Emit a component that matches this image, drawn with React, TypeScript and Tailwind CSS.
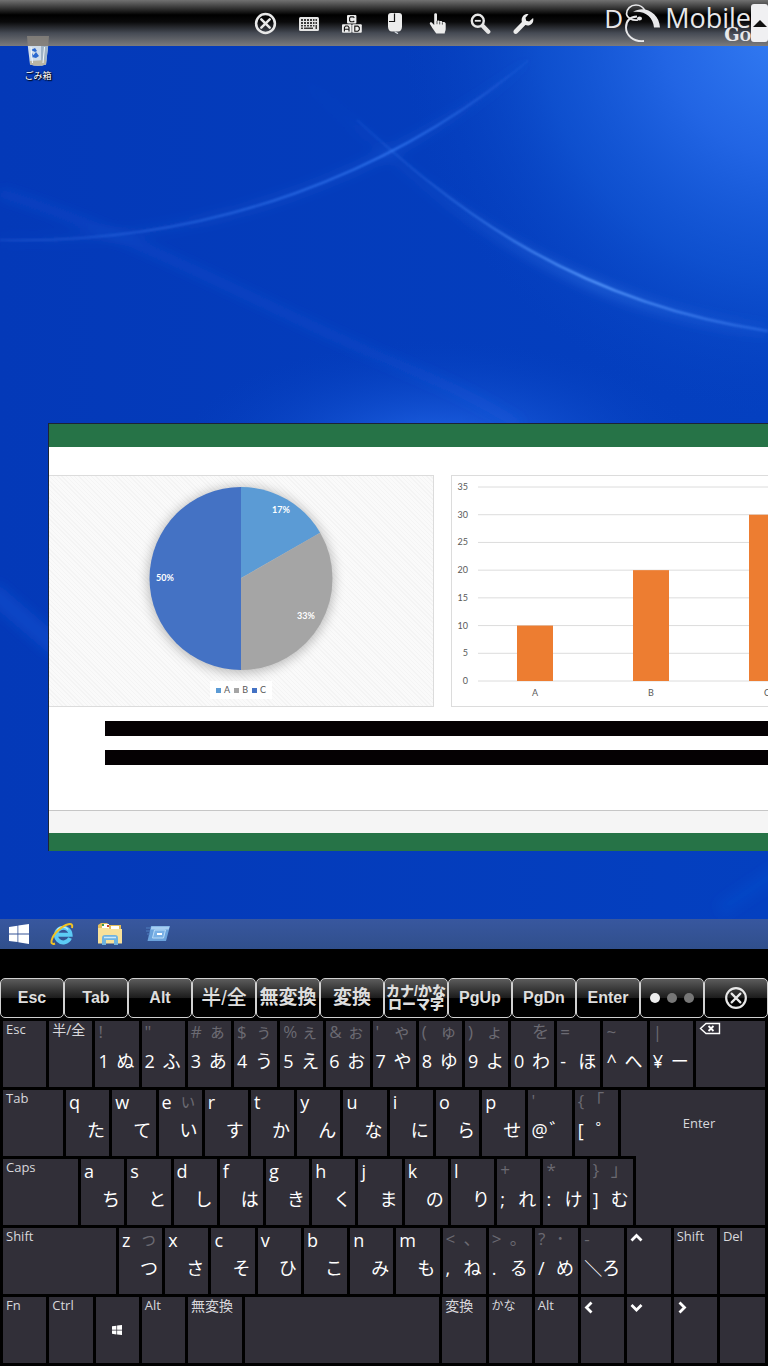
import type { ReactNode } from 'react';
import clsx from 'clsx';

const JP = "font-['Open_Sans','Noto_Sans_CJK_JP',sans-serif]";

interface KeyDef {
  w: number;
  id: string;
  // special keys carry one label, the others up to four legends
  label?: ReactNode;
  center?: boolean;
  small?: boolean;
  shift?: string;
  shiftKana?: string;
  main?: string;
  kana?: string;
}

const U = 46.2;

function special(id: string, w: number, label: ReactNode = id, extra: Partial<KeyDef> = {}): KeyDef {
  return { id, w, label, ...extra };
}

function symbol(shift: string, shiftKana: string, main: string, kana: string): KeyDef {
  return { id: main, w: U, shift, shiftKana, main, kana };
}

function letter(main: string, kana: string, shiftKana = ''): KeyDef {
  return { id: main, w: U, shift: main, shiftKana, kana };
}

function Chevron({ d }: { d: string }) {
  return (
    <svg width="13" height="13" viewBox="0 0 13 13" className="mt-1" fill="none" stroke="#fff" strokeWidth="2.8">
      <path d={d} />
    </svg>
  );
}

const BackspaceIcon = (
  <svg width="22" height="13" viewBox="0 0 22 13" className="mt-px" fill="none" stroke="#fff" strokeWidth="1.4">
    <path d="M7 1.5h13.5v10H7L1.5 6.5z" />
    <path d="M9.5 4l5 5M14.5 4l-5 5" strokeWidth="1.8" />
  </svg>
);

const WinKeyIcon = (
  <svg width="10" height="10" viewBox="0 0 10 10" className="mr-1" fill="#fff">
    <path d="M0 1.3l4.4-.6v4H0zM5.1.6L10 0v4.7H5.1zM0 5.4h4.4v4L0 8.8zM5.1 5.4H10V10l-4.9-.6z" />
  </svg>
);

const ROW_1: KeyDef[] = [
  special('Esc', U),
  special('半/全', U),
  symbol('!', '', '1', 'ぬ'),
  symbol('"', '', '2', 'ふ'),
  symbol('#', 'ぁ', '3', 'あ'),
  symbol('$', 'ぅ', '4', 'う'),
  symbol('%', 'ぇ', '5', 'え'),
  symbol('&', 'ぉ', '6', 'お'),
  symbol("'", 'ゃ', '7', 'や'),
  symbol('(', 'ゅ', '8', 'ゆ'),
  symbol(')', 'ょ', '9', 'よ'),
  symbol('', 'を', '0', 'わ'),
  symbol('=', '', '-', 'ほ'),
  symbol('~', '', '^', 'へ'),
  symbol('|', '', '¥', 'ー'),
  special('Backspace', 72, BackspaceIcon),
];

const ROW_2: KeyDef[] = [
  special('Tab', 63),
  letter('q', 'た'),
  letter('w', 'て'),
  letter('e', 'い', 'ぃ'),
  letter('r', 'す'),
  letter('t', 'か'),
  letter('y', 'ん'),
  letter('u', 'な'),
  letter('i', 'に'),
  letter('o', 'ら'),
  letter('p', 'せ'),
  symbol("'", '', '@', '゛'),
  symbol('{', '｢', '[', '゜'),
];

const ROW_3: KeyDef[] = [
  special('Caps', 78),
  letter('a', 'ち'),
  letter('s', 'と'),
  letter('d', 'し'),
  letter('f', 'は'),
  letter('g', 'き'),
  letter('h', 'く'),
  letter('j', 'ま'),
  letter('k', 'の'),
  letter('l', 'り'),
  symbol('+', '', ';', 'れ'),
  symbol('*', '', ':', 'け'),
  symbol('}', '｣', ']', 'む'),
];

const ROW_4: KeyDef[] = [
  special('Shift', 116),
  letter('z', 'つ', 'っ'),
  letter('x', 'さ'),
  letter('c', 'そ'),
  letter('v', 'ひ'),
  letter('b', 'こ'),
  letter('n', 'み'),
  letter('m', 'も'),
  symbol('<', '、', ',', 'ね'),
  symbol('>', '。', '.', 'る'),
  symbol('?', '･', '/', 'め'),
  symbol('-', '', '＼', 'ろ'),
  special('Up', U, <Chevron d="M1.5 8.5l5-5 5 5" />),
  special('Right Shift', U, 'Shift'),
  special('Del', 48),
];

const ROW_5: KeyDef[] = [
  special('Fn', U),
  special('Ctrl', U),
  special('Windows', U, WinKeyIcon, { center: true }),
  special('Alt', U),
  special('無変換', 57),
  special('Space', 197, ''),
  special('変換', U),
  special('かな', U, 'かな', { small: true }),
  special('Right Alt', U, 'Alt'),
  special('Left', U, <Chevron d="M7.5 1.5l-5 5 5 5" />),
  special('Down', U, <Chevron d="M1.5 4l5 5 5-5" />),
  special('Right', U, <Chevron d="M2.5 1.5l5 5-5 5" />),
  special('Blank', 48, ''),
];

function Key({ def, total }: { def: KeyDef; total: number }) {
  const isLetter = !def.main && def.label === undefined;
  return (
    <button
      type="button"
      aria-label={def.id}
      style={{ width: `${(def.w / total) * 100}%` }}
      className={clsx(
        'h-[69px] min-w-0 overflow-hidden whitespace-nowrap border-l-[3px] border-t-[3px] border-black bg-[#312f38] pl-[3px] text-left',
        def.center ? 'flex items-center justify-center' : 'block',
      )}
    >
      {def.label !== undefined ? (
        <span
          className={clsx(
            'block leading-[17px] text-[#d8d8dc]',
            def.center ? '' : 'h-[66px]',
            def.small ? 'text-[12px]' : /^[半無変]/.test(def.id) ? 'text-[14px]' : 'text-[13px]',
          )}
        >
          {def.label}
        </span>
      ) : (
        <span className="grid h-[66px] grid-cols-[18px_1fr] grid-rows-[24px_24px] content-start gap-y-1 text-[18px] leading-[24px] text-white">
          <span className={isLetter ? '' : 'text-[17px] leading-[22px] text-[#6b6a72]'}>{def.shift}</span>
          <span className="text-[17px] leading-[22px] text-[#6b6a72]">{def.shiftKana}</span>
          <span>{def.main}</span>
          <span>{def.kana}</span>
        </span>
      )}
    </button>
  );
}

function KeyRow({ keys, className }: { keys: KeyDef[]; className?: string }) {
  const total = keys.reduce((sum, k) => sum + k.w, 0);
  return (
    <div className={clsx('flex', className)}>
      {keys.map((k) => (
        <Key key={k.id} def={k} total={total} />
      ))}
    </div>
  );
}

function Keyboard() {
  return (
    <div className={clsx('bg-black pr-[3px] pb-[3px]', JP)}>
      <KeyRow keys={ROW_1} />
      <div className="grid grid-cols-[618fr_15fr_132fr]">
        {/* Enter spans both rows; the third row covers its lower left corner */}
        <button
          type="button"
          className="col-start-2 col-end-4 row-start-1 row-end-3 flex items-start justify-center border-l-[3px] border-t-[3px] border-black bg-[#312f38] pt-6 pl-3 text-[13px] leading-[18px] text-[#d8d8dc]"
        >
          Enter
        </button>
        <KeyRow keys={ROW_2} className="col-start-1 row-start-1" />
        <KeyRow keys={ROW_3} className="col-start-1 col-end-3 row-start-2 bg-black pr-[3px] -mr-[3px]" />
      </div>
      <KeyRow keys={ROW_4} />
      <KeyRow keys={ROW_5} />
    </div>
  );
}

function CloseCircle({ size, stroke }: { size: number; stroke: number }) {
  return (
    <svg width={size} height={size} viewBox="0 0 22 22" fill="none" stroke="#e8e8e8" strokeWidth={stroke}>
      <circle cx="11" cy="11" r="9" />
      <path d="M7 7l8 8M15 7l-8 8" strokeLinecap="round" />
    </svg>
  );
}

const FUNCTION_KEYS: { id: string; label: ReactNode; className: string }[] = [
  { id: 'Esc', label: 'Esc', className: 'text-[16px] font-bold' },
  { id: 'Tab', label: 'Tab', className: 'text-[16px] font-bold' },
  { id: 'Alt', label: 'Alt', className: 'text-[16px] font-bold' },
  { id: '半/全', label: '半/全', className: 'text-[20px] font-medium' },
  { id: '無変換', label: '無変換', className: 'text-[19px] font-bold' },
  { id: '変換', label: '変換', className: 'text-[19px] font-bold' },
  {
    id: 'カナ/かな ローマ字',
    label: (
      <>
        カナ/かな
        <br />
        ローマ字
      </>
    ),
    className: 'text-[14px] leading-[13px] font-black',
  },
  { id: 'PgUp', label: 'PgUp', className: 'text-[16px] font-bold' },
  { id: 'PgDn', label: 'PgDn', className: 'text-[16px] font-bold' },
  { id: 'Enter', label: 'Enter', className: 'text-[16px] font-bold' },
  {
    id: 'Page 1 of 3',
    label: (
      <>
        <span className="size-[10px] rounded-full bg-[#eee]" />
        <span className="size-[10px] rounded-full bg-[#777]" />
        <span className="size-[10px] rounded-full bg-[#777]" />
      </>
    ),
    className: 'gap-[7px]',
  },
  { id: 'Close', label: <CloseCircle size={24} stroke={2} />, className: '' },
];

function FunctionBar() {
  return (
    <div className="grid grid-cols-12 bg-black pt-[29px]">
      {FUNCTION_KEYS.map((k) => (
        <button
          key={k.id}
          type="button"
          aria-label={k.id}
          className={clsx(
            "flex h-10 items-center justify-center rounded-[5px] border border-[#d0d0d0] bg-linear-to-b from-[#5c5c5c] from-0% via-[#1c1c1c] via-50% to-black to-52% whitespace-nowrap font-['Liberation_Sans','Noto_Sans_CJK_JP',sans-serif] text-[#dedede]",
            k.className,
          )}
        >
          {typeof k.label === 'string' || k.id.startsWith('カナ') ? <span>{k.label}</span> : k.label}
        </button>
      ))}
    </div>
  );
}

function KeyboardIcon() {
  return (
    <svg width="20" height="14" viewBox="0 0 20 14">
      <rect width="20" height="14" rx="1.5" fill="#e4e4e4" />
      <path
        d="M2 2h2v2H2zM5 2h2v2H5zM8 2h2v2H8zM11 2h2v2h-2zM14 2h1.5v2H14zM16.5 2H18v2h-1.5zM2 5h2v2H2zM5 5h2v2H5zM8 5h2v2H8zM11 5h2v2h-2zM14 5h1.5v2H14zM16.5 5H18v2h-1.5zM2 8h2v1.5H2zM5 8h2v1.5H5zM8 8h2v1.5H8zM11 8h2v1.5h-2zM14 8h1.5v1.5H14zM2 10.5h2V12H2zM5 10.5h9V12H5zM16.5 8H18v4h-1.5z"
        fill="#3a3a3a"
      />
    </svg>
  );
}

function CadIcon() {
  return (
    <svg width="20" height="18" viewBox="0 0 20 18">
      <g fill="#ededed">
        <rect x="5" width="9.400" height="8.600" rx="1" />
        <rect y="9.200" width="9.600" height="8.600" rx="1" />
        <rect x="10.200" y="9.200" width="9.600" height="8.600" rx="1" />
      </g>
      <g fill="none" stroke="#111" strokeWidth="1.100">
        <path d="M12.300 2.800L11.400 1.900H8.600L7.600 2.900v2.800l1 1h2.800l.9-.9" />
        <path d="M2.400 16.400v-4l1.200-1.400h2.200L7 12.400v4M2.400 14.200H7" />
        <path d="M12.800 11.100h3.100l1.400 1.400v2.300l-1.400 1.400h-3.100z" />
      </g>
    </svg>
  );
}

function MouseIcon() {
  return (
    <svg width="14" height="22" viewBox="0 0 14 22">
      <path d="M3 0h8c2 0 3 1.200 3 3v10.500c0 3-1.500 5-4 5H4c-2.500 0-4-2-4-5V3c0-1.800 1-3 3-3z" fill="#ececec" />
      <path d="M6.500 .5v8H1" fill="none" stroke="#111" strokeWidth="1.200" />
      <path d="M7 18.500c0 1.400 2.400 1 2.600 2.500" fill="none" stroke="#cfd4dc" strokeWidth="1.400" />
    </svg>
  );
}

function HandIcon() {
  return (
    <svg width="18" height="22" viewBox="0 0 18 22">
      <path
        d="M5.200 1.500C5.200-.3 8-.3 8 1.500V8c.5-.8 2.500-.7 2.700.6.700-.9 2.500-.5 2.700.7.800-.7 3.300-.4 3.300 1.500V16c0 1.700-1 2.800-1 4.600H7.300C6 18.500 2.500 14 1 11.200c-.8-1.500.8-2.600 2-1.500l2.200 2.200z"
        fill="#ececec"
      />
      <path d="M8 7.800v3.400M10.700 8.600v2.800M13.400 9.400v2.200" stroke="#333" strokeWidth=".8" fill="none" />
    </svg>
  );
}

function ZoomOutIcon() {
  return (
    <svg width="21" height="22" viewBox="0 0 21 22" fill="none" stroke="#e6e6e6">
      <circle cx="7.800" cy="7.800" r="6" strokeWidth="2.400" />
      <path d="M4.800 7.800h6" strokeWidth="1.800" />
      <path d="M12.800 13l5.500 5.800" strokeWidth="4.200" strokeLinecap="round" />
    </svg>
  );
}

function WrenchIcon() {
  return (
    <svg width="21" height="22" viewBox="0 0 21 22">
      <path
        d="M15.500 1.200l-3 3.600.7 2.900 2.900.8 4-3.500c1 3.700-1.300 7.500-5.500 7.500-.8 0-1.600-.2-2.200-.5L4.600 20c-1.300 1.300-2.800 1-3.600.2-.8-.9-.9-2.300.3-3.500l7.600-7.600C7.700 4.500 11 .4 15.500 1.200z"
        fill="#ececec"
      />
    </svg>
  );
}

function SwirlLogo() {
  return (
    <svg width="38" height="40" viewBox="0 0 38 40" fill="none" stroke="#e8e8ea">
      <path d="M22 7C20 2.500 17 1 13 1C7.500 1 3.500 5 3.500 10C4 13.500 9 17 15 16" strokeWidth="1.700" />
      <path d="M21 37C10 38 3 31 3 23.500C3 17 7 13 14 12.500" strokeWidth="1.900" />
      <path d="M10 8C21 .5 36.500 9 37 23.500H31C30 13 22 6.500 10 8z" fill="#e8e8ea" stroke="none" />
      <ellipse cx="16.500" cy="14.500" rx="2.500" ry="2" fill="#e8e8ea" stroke="none" />
    </svg>
  );
}

const TOOLS: { label: string; icon: ReactNode }[] = [
  { label: 'Disconnect', icon: <CloseCircle size={23} stroke={2.4} /> },
  { label: 'Keyboard', icon: <KeyboardIcon /> },
  { label: 'Ctrl Alt Del', icon: <CadIcon /> },
  { label: 'Mouse', icon: <MouseIcon /> },
  { label: 'Touch', icon: <HandIcon /> },
  { label: 'Zoom out', icon: <ZoomOutIcon /> },
  { label: 'Settings', icon: <WrenchIcon /> },
];

function TopBar() {
  return (
    <header className="grid h-[46px] grid-cols-[1fr_auto_1fr] items-center bg-[linear-gradient(#717171_0,#000_15px,#0a0a0b_22px,#454a54_33px,#7b7b7d_46px)] pl-[21px]">
      <div />
      <nav className="flex">
        {TOOLS.map((tool) => (
          <button key={tool.label} type="button" aria-label={tool.label} className="flex h-[46px] w-[43px] items-center justify-center pt-px">
            {tool.icon}
          </button>
        ))}
      </nav>
      <div className="flex h-[46px] items-start justify-end pt-1 text-[#e8e8ea]">
        <span className="font-['Open_Sans',sans-serif] text-[26px] leading-[28px]">D</span>
        <SwirlLogo />
        <div className="ml-1 flex flex-col items-end">
          <span className="font-['Open_Sans',sans-serif] text-[27px] leading-[28px]">Mobile</span>
          <span className="-mt-1 font-['DejaVu_Serif',serif] text-[18px] leading-[14px] font-bold [font-variant:small-caps]">Go</span>
        </div>
        <button type="button" aria-label="Hide toolbar" className="flex h-[38px] w-[17px] items-center justify-center rounded-[3px] bg-[#f0f0f2]">
          <svg width="14" height="7" viewBox="0 0 14 7">
            <path d="M7 0l7 7H0z" fill="#111" />
          </svg>
        </button>
      </div>
    </header>
  );
}

function Wallpaper() {
  return (
    <svg className="absolute inset-0 h-full w-full" viewBox="0 46 768 873" preserveAspectRatio="none" fill="none">
      <defs>
        <radialGradient id="glowTop" gradientUnits="userSpaceOnUse" cx="800" cy="20" r="400">
          <stop offset="0" stopColor="#3680f6" />
          <stop offset=".35" stopColor="#2569e8" stopOpacity=".9" />
          <stop offset=".65" stopColor="#155bd9" stopOpacity=".6" />
          <stop offset="1" stopColor="#0642c2" stopOpacity="0" />
        </radialGradient>
        <radialGradient id="glowMid" gradientUnits="userSpaceOnUse" cx="0" cy="0" r="1" gradientTransform="translate(440 450) scale(260 110)">
          <stop offset="0" stopColor="#2468ea" />
          <stop offset="1" stopColor="#0642c2" stopOpacity="0" />
        </radialGradient>
        <linearGradient id="arcRise" gradientUnits="userSpaceOnUse" x1="0" y1="240" x2="529" y2="60">
          <stop offset="0" stopColor="#3f80f5" stopOpacity=".2" />
          <stop offset=".72" stopColor="#3f86ff" stopOpacity=".8" />
          <stop offset="1" stopColor="#3f80f5" stopOpacity=".1" />
        </linearGradient>
        <linearGradient id="arcFall" gradientUnits="userSpaceOnUse" x1="289" y1="77" x2="768" y2="330">
          <stop offset="0" stopColor="#3f80f5" stopOpacity="0" />
          <stop offset=".3" stopColor="#3f80f5" stopOpacity=".3" />
          <stop offset=".68" stopColor="#5a9cff" />
          <stop offset="1" stopColor="#3f80f5" stopOpacity=".5" />
        </linearGradient>
        <linearGradient id="base" gradientUnits="userSpaceOnUse" x1="0" y1="0" x2="768" y2="0">
          <stop offset="0" stopColor="#0439b8" />
          <stop offset="1" stopColor="#0440c0" />
        </linearGradient>
        <filter id="thin" x="-10%" y="-10%" width="120%" height="120%">
          <feGaussianBlur stdDeviation=".8" />
        </filter>
        <filter id="wide" x="-20%" y="-20%" width="140%" height="140%">
          <feGaussianBlur stdDeviation="6" />
        </filter>
      </defs>
      <rect y="46" width="768" height="873" fill="url(#base)" />
      <rect y="46" width="768" height="400" fill="url(#glowTop)" />
      <rect y="340" width="768" height="220" fill="url(#glowMid)" />
      <g filter="url(#wide)">
        <path d="M0 193C140 236 270 310 372 353S480 402 520 425" stroke="#2a6aec" strokeOpacity=".2" strokeWidth="10" />
        <path d="M289 67C380 145 520 300 768 331" stroke="url(#arcFall)" strokeOpacity=".3" strokeWidth="10" />
        <path d="M0 240C215 245 397 170 529 60" stroke="url(#arcRise)" strokeOpacity=".25" strokeWidth="8" />
        <path d="M-10 590L60 650" stroke="#1a5ee0" strokeOpacity=".35" strokeWidth="20" />
        <path d="M720 910L780 870" stroke="#1a5ee0" strokeOpacity=".2" strokeWidth="14" />
      </g>
      <g filter="url(#thin)">
        <path d="M0 240C215 245 397 170 529 60" stroke="url(#arcRise)" strokeWidth="1.800" />
        <path d="M357 120C440 195 560 300 768 331" stroke="url(#arcFall)" strokeWidth="2.200" />
      </g>
    </svg>
  );
}

function RecycleBin() {
  return (
    <button type="button" className="absolute -top-[10px] left-4 flex w-11 flex-col items-center">
      <svg width="24" height="31" viewBox="0 0 24 31">
        <path d="M1 0h22l-.8 10H1.800z" fill="#8a857e" opacity=".8" />
        <path d="M1.800 10h20.400L20 28.500Q12 31 4 28.500z" fill="#cfdcea" />
        <path d="M15 10h7l-2 18.500-5 1.200z" fill="#9fb3c6" />
        <path d="M4 25l16-1-.3 4.500Q12 31 4 28.500z" fill="#b9b5a4" />
        <path d="M5 14l4-2 2 3-2 1zM10 16l3 4-3 2-4-1zM6 17l2 3-2 2z" fill="#2b68cf" />
        <path d="M5 11l1.500 16M18.500 11L17 27" stroke="#f3f8fc" strokeWidth="1" />
      </svg>
      <span className="pt-0.5 font-['Noto_Sans_CJK_JP',sans-serif] text-[9px] leading-[14px] text-white [text-shadow:1px_1px_1px_#000,0_0_2px_#000]">
        ごみ箱
      </span>
    </button>
  );
}

const PIE_LEGEND = [
  { name: 'A', swatch: 'bg-[#5b9bd5]' },
  { name: 'B', swatch: 'bg-[#a5a5a5]' },
  { name: 'C', swatch: 'bg-[#4472c4]' },
];

function PieChart() {
  return (
    <div className="flex w-[385px] shrink-0 flex-col items-center border border-l-0 border-[#dcdcdc] bg-[repeating-linear-gradient(45deg,#f4f4f4_0_1px,#fafafa_1px_3px)]">
      <svg width="230" height="205" viewBox="0 0 230 205" fontFamily="Lato, sans-serif" fontSize="9" fontWeight="700" textAnchor="middle">
        <defs>
          <filter id="pieShadow" x="-20%" y="-20%" width="140%" height="140%">
            <feGaussianBlur stdDeviation="6" />
          </filter>
        </defs>
        <circle cx="115" cy="104" r="93" fill="#000" opacity=".25" filter="url(#pieShadow)" />
        <path d="M115 102V11A91.500 91.500 0 0 1 194.200 56.700z" fill="#5b9bd5" />
        <path d="M115 102.500L194.200 56.700A91.500 91.500 0 0 1 115 194z" fill="#a5a5a5" />
        <path d="M115 11a91.500 91.500 0 0 0 0 183z" fill="#4472c4" />
        <g fill="#fff">
          <text x="155" y="37">17%</text>
          <text x="180" y="143">33%</text>
          <text x="39" y="105">50%</text>
        </g>
      </svg>
      <ul className="flex gap-1 bg-white px-1.5 font-['Lato',sans-serif] text-[9px] leading-[18px] text-[#595959]">
        {PIE_LEGEND.map((item) => (
          <li key={item.name} className="flex items-center gap-[3px]">
            <span className={clsx('size-[5px]', item.swatch)} />
            {item.name}
          </li>
        ))}
      </ul>
    </div>
  );
}

const TICKS = [35, 30, 25, 20, 15, 10, 5, 0];
const BARS = [
  { name: 'A', value: 10 },
  { name: 'B', value: 20 },
  { name: 'C', value: 30 },
];

function BarChart() {
  const y = (value: number) => 205 - (value * 194) / 35;
  return (
    <div className="min-w-0 flex-1 overflow-hidden border border-r-0 border-[#dcdcdc] bg-white">
      <svg width="380" height="230" fontFamily="Lato, sans-serif" fontSize="9" fill="#595959">
        {TICKS.map((t) => (
          <g key={t}>
            <path d={`M26 ${y(t)}H380`} stroke="#dcdcdc" />
            <text x="16" y={y(t) + 3} textAnchor="end">
              {t}
            </text>
          </g>
        ))}
        {BARS.map((b, i) => (
          <g key={b.name}>
            <rect x={65 + i * 116} y={y(b.value)} width="36" height={205 - y(b.value)} fill="#ed7d31" />
            <text x={83 + i * 116} y="220" textAnchor="middle">
              {b.name}
            </text>
          </g>
        ))}
      </svg>
    </div>
  );
}

function SheetWindow() {
  return (
    <section className="relative ml-12 overflow-hidden border-t border-l border-[#1c2436] bg-white">
      <div className="h-[23px] bg-[#267347]" />
      <div className="flex h-[260px] gap-[17px] pt-7">
        <PieChart />
        <BarChart />
      </div>
      <div className="mt-[14px] ml-14 h-[15px] bg-[#050103]" />
      <div className="mt-[14px] ml-14 h-[15px] bg-[#050103]" />
      <div className="mt-[45px] h-[23px] border-t border-[#c6c6c6] bg-[#f5f5f5]" />
      <div className="h-[18px] bg-[#267347]" />
    </section>
  );
}

function Taskbar() {
  return (
    <div className="flex h-[30px] items-center bg-linear-to-b from-[#38579f] to-[#304f8c]">
      <button type="button" aria-label="Start" className="flex w-[38px] justify-center">
        <svg width="20" height="20" viewBox="0 0 20 20" fill="#fff">
          <path d="M0 3l8.500-1.200v7.700H0zM9.300 1.600L20 0v9.500H9.300zM0 10.400h8.500v7.700L0 17zM9.300 10.400H20V20L9.300 18.300z" />
        </svg>
      </button>
      <button type="button" aria-label="Internet Explorer" className="flex w-12 justify-center">
        <svg width="24" height="24" viewBox="0 0 24 24" fill="none">
          <path d="M20 16A7.300 7.300 0 1 1 20.600 12.800H7" stroke="#5ccbf5" strokeWidth="4" />
          <path d="M7 8.500A6.500 6.500 0 0 1 18 7.500" stroke="#b5ecff" strokeWidth="1.500" />
          <path d="M5 21.500C-1 24 1 15 8 8.500S24-1 22 6" stroke="#f3c322" strokeWidth="2" />
        </svg>
      </button>
      <button type="button" aria-label="File Explorer" className="flex w-12 justify-center">
        <svg width="26" height="24" viewBox="0 0 26 24">
          <path d="M1 3l3-2h6l2 2h12v18H1z" fill="#e3bd5c" />
          <path d="M5 2h7v5H5zM14 4h8v3h-8z" fill="#fff" />
          <path d="M5 2h2v2H5z" fill="#3c9a4a" />
          <path d="M10 3h2v2h-2z" fill="#c8442f" />
          <path d="M1 6h10l2 1h12v14.500H1z" fill="#f8e19a" />
          <path d="M5 23v-7q0-3 3-3h10q3 0 3 3v7h-4v-5H9v5z" fill="#6fb3e0" />
          <path d="M7 15.500h12" stroke="#cbe9fa" strokeWidth="1.500" />
        </svg>
      </button>
      <button type="button" aria-label="Remote session" className="flex w-12 justify-center">
        <svg width="25" height="18" viewBox="0 0 25 18" fill="none">
          <path d="M5 1h19l-4 15H1.500z" fill="#6ba3dc" />
          <path d="M5.500 1.500h18l-.8 3H4.700z" fill="#a6cef2" />
          <path d="M8.500 5h11l-2 8h-11z" stroke="#b9dcf7" fill="#78b0e6" />
          <path d="M11 9h5" stroke="#fff" strokeWidth="2" />
          <path d="M0 3h5M0 6h4M1 9h3" stroke="#4f7fc0" />
        </svg>
      </button>
    </div>
  );
}

export default function App() {
  return (
    <main className="w-full overflow-hidden bg-black">
      <TopBar />
      <div className="relative bg-[#0439bb] pt-[377px] pb-[68px]">
        <Wallpaper />
        <RecycleBin />
        <SheetWindow />
      </div>
      <Taskbar />
      <FunctionBar />
      <Keyboard />
    </main>
  );
}
